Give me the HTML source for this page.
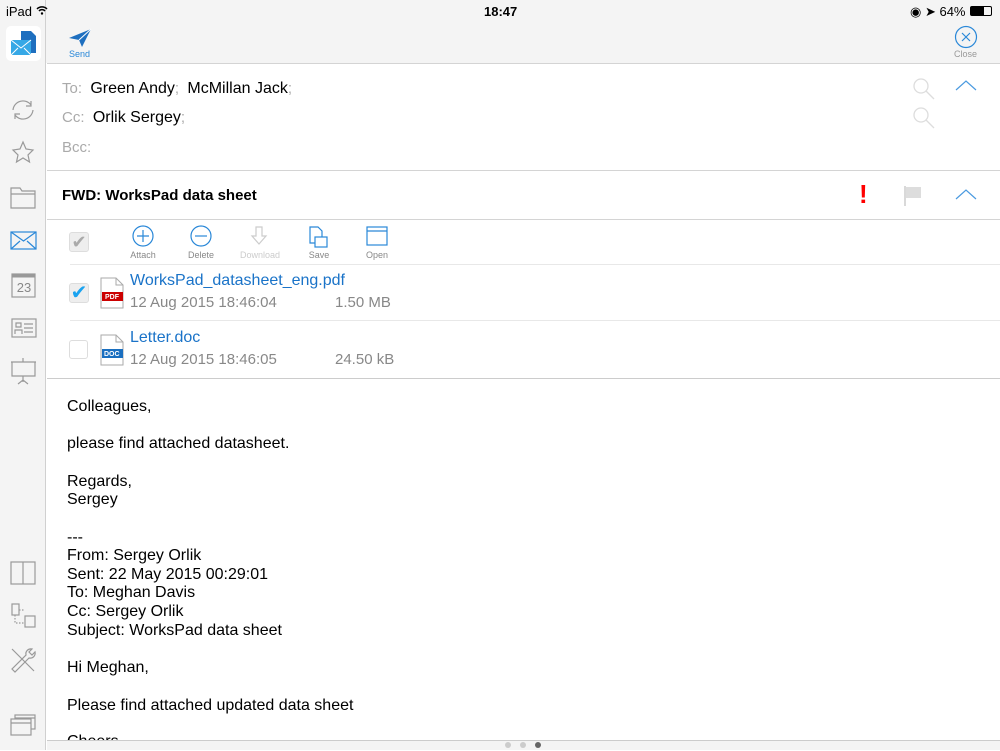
<!DOCTYPE html>
<html><head><meta charset="utf-8"><style>
*{margin:0;padding:0;box-sizing:border-box}
body{width:1000px;height:750px;overflow:hidden;background:#fff;font-family:"Liberation Sans",sans-serif;position:relative;color:#000}
.a{position:absolute}
.g{color:#aaa}
.line{position:absolute;height:1px;background:#d4d4d4}
.body div{position:absolute;left:67px;font-size:16px;white-space:nowrap}
.tb{position:absolute;font-size:9px;color:#888;text-align:center;width:50px}
</style></head><body>
<div class="a" style="left:0;top:0;width:1000px;height:63px;background:#f4f4f4"></div>
<div class="a" style="left:0;top:0;width:46px;height:750px;background:#f4f4f4;border-right:1px solid #d0d0d0"></div>
<div class="a" style="left:6px;top:4px;font-size:13px">iPad</div>
<svg class="a" style="left:36px;top:5px" width="12" height="10" viewBox="0 0 12 10"><path d="M1 4a7 7 0 0 1 10 0M3 6a4 4 0 0 1 6 0" stroke="#000" stroke-width="1.5" fill="none"/><circle cx="6" cy="8.5" r="1.2"/></svg>
<div class="a" style="left:484px;top:4px;font-size:13px;font-weight:bold">18:47</div>
<div class="a" style="left:910px;top:4px;font-size:13px">◉ ➤ 64%</div>
<div class="a" style="left:970px;top:6px;width:22px;height:10px;border:1px solid #000;border-radius:2px"><div style="width:13px;height:8px;background:#000"></div></div>
<div class="a" style="left:6px;top:26px;width:35px;height:35px;background:#fff;border-radius:5px"></div>
<svg class="a" style="left:9px;top:29px" width="30" height="30" viewBox="0 0 30 30"><path d="M12 2h10l5 5v17H12z" fill="#1e6fbf"/><rect x="2" y="11" width="20" height="15" fill="#36a8e6"/><path d="M2 11l10 8 10-8M2 26l7-7M22 26l-7-7" stroke="#fff" fill="none"/></svg>
<svg class="a" style="left:0;top:90px" width="46" height="310" viewBox="0 0 46 310" fill="none" stroke="#999" stroke-width="1.2">
<path d="M13 20a10 10 0 0 1 18-5M33 20a10 10 0 0 1-18 5M31 11v5h-5M15 29v-5h5"/>
<path d="M23 52l3 7 7 1-5 5 1.5 7L23 68l-6.5 4 1.5-7-5-5 7-1z"/>
<path d="M11 98h9l2 3h13v17H11z M11 104h24"/>
<rect x="11" y="142" width="25" height="17" stroke="#2a88d8"/><path d="M11 142l12.5 9 12.5-9M11 159l9-8M36 159l-9-8" stroke="#2a88d8"/>
<rect x="12" y="184" width="23" height="23"/><path d="M12 186h23" stroke-width="3"/>
<rect x="12" y="229" width="24" height="18"/><path d="M16 233h5v4h-5zM15 244v-4h7v4M24 234h9M24 238h9M24 242h9"/>
<path d="M11 272h25M12 272v14h23v-14M23 268v4M23 286v6M18 294l5-4 5 4"/>
</svg>
<div class="a" style="left:14px;top:280px;width:20px;text-align:center;font-size:13px;color:#888">23</div>
<svg class="a" style="left:0;top:555px" width="46" height="190" viewBox="0 0 46 190" fill="none" stroke="#999" stroke-width="1.2">
<rect x="11" y="7" width="24" height="22"/><path d="M23 7v22"/>
<rect x="12" y="49" width="7" height="11"/><rect x="25" y="61" width="10" height="11"/><path d="M19 55h6M15 60v8h10" stroke-dasharray="1.5 1.5"/>
<path d="M12 94l22 22M32 94a5 5 0 0 0-6 6L12 114l3 3 14-14a5 5 0 0 0 6-6l-3 3-3-3z"/>
<rect x="15" y="160" width="20" height="14"/><rect x="11" y="164" width="20" height="16" fill="#f4f4f4"/><path d="M11 168h20M15 163h20"/>
</svg>
<svg class="a" style="left:68px;top:28px" width="24" height="20" viewBox="0 0 24 20"><path d="M1 10L23 1 14 19 11 12z" fill="#1e6fbf"/><path d="M11 12L23 1" stroke="#fff"/></svg>
<div class="a" style="left:69px;top:49px;font-size:9px;color:#2a88d8">Send</div>
<svg class="a" style="left:954px;top:25px" width="24" height="24"><circle cx="12" cy="12" r="10.5" stroke="#2a88d8" stroke-width="1.2" fill="none"/><path d="M8 8l8 8M16 8l-8 8" stroke="#2a88d8" stroke-width="1.2"/></svg>
<div class="a" style="left:954px;top:49px;font-size:9px;color:#999">Close</div>
<div class="line" style="left:47px;top:63px;width:953px"></div>
<div class="a" style="left:62px;top:80px;font-size:15px"><span class="g">To:</span>&nbsp; <span style="font-size:16px">Green Andy</span><span class="g">;</span>&nbsp; <span style="font-size:16px">McMillan Jack</span><span class="g">;</span></div>
<div class="a" style="left:62px;top:109px;font-size:15px"><span class="g">Cc:</span>&nbsp; <span style="font-size:16px">Orlik Sergey</span><span class="g">;</span></div>
<div class="a g" style="left:62px;top:139px;font-size:15px">Bcc:</div>
<svg class="a" style="left:912px;top:77px" width="26" height="60" fill="none" stroke="#ddd" stroke-width="1.3"><circle cx="9" cy="9" r="7"/><path d="M14 14l8 8"/><circle cx="9" cy="38" r="7"/><path d="M14 43l8 8"/></svg>
<svg class="a" style="left:954px;top:80px" width="24" height="12"><path d="M2 10l10-9 10 9" stroke="#4a9ae0" fill="none" stroke-width="1.2"/></svg>
<div class="line" style="left:47px;top:170px;width:953px"></div>
<div class="a" style="left:62px;top:187px;font-size:15px;font-weight:bold">FWD: WorksPad data sheet</div>
<div class="a" style="left:859px;top:180px;font-size:26px;font-weight:bold;color:#f00;line-height:28px">!</div>
<svg class="a" style="left:904px;top:186px" width="18" height="20"><path d="M1 0v20" stroke="#ccc" stroke-width="1.5"/><path d="M2 1h15v11H2z" fill="#ddd"/></svg>
<svg class="a" style="left:954px;top:189px" width="24" height="12"><path d="M2 10l10-9 10 9" stroke="#4a9ae0" fill="none" stroke-width="1.2"/></svg>
<div class="line" style="left:47px;top:219px;width:953px"></div>
<div class="a" style="left:69px;top:232px;width:20px;height:20px;background:#eee;border:1px solid #ddd;border-radius:3px;color:#aaa;font-size:18px;line-height:18px;text-align:center">✔</div>
<svg class="a" style="left:130px;top:225px" width="260" height="26" fill="none" stroke-width="1.2">
<circle cx="13" cy="11" r="10" stroke="#2a88d8"/><path d="M13 5v12M7 11h12" stroke="#2a88d8"/>
<circle cx="71" cy="11" r="10" stroke="#2a88d8"/><path d="M65 11h12" stroke="#2a88d8"/>
<path d="M126 2h6v9h4l-7 8-7-8h4z" stroke="#ccc"/>
<path d="M180 2h8l4 4v12h-12z" stroke="#2a88d8"/><rect x="185" y="12" width="12" height="10" stroke="#2a88d8" fill="#fff"/>
<rect x="237" y="2" width="20" height="18" stroke="#2a88d8"/><path d="M237 6h20" stroke="#2a88d8"/>
</svg>
<div class="tb" style="left:118px;top:250px">Attach</div>
<div class="tb" style="left:176px;top:250px">Delete</div>
<div class="tb" style="left:235px;top:250px;color:#ccc">Download</div>
<div class="tb" style="left:294px;top:250px">Save</div>
<div class="tb" style="left:352px;top:250px">Open</div>
<div class="line" style="left:70px;top:264px;width:930px;background:#e8e8e8"></div>
<div class="a" style="left:69px;top:283px;width:20px;height:20px;background:#eee;border:1px solid #ddd;border-radius:3px;color:#1aa3f0;font-size:20px;line-height:18px;text-align:center">✔</div>
<svg class="a" style="left:100px;top:277px" width="24" height="32"><path d="M1 1h15l7 7v23H1z" fill="#fff" stroke="#aaa"/><path d="M16 1v7h7" fill="none" stroke="#aaa"/><rect x="2" y="15" width="21" height="9" fill="#c00"/><text x="5" y="22" font-size="7" fill="#fff" font-family="Liberation Sans" font-weight="bold">PDF</text></svg>
<div class="a" style="left:130px;top:272px;font-size:16px;color:#1a73c8">WorksPad_datasheet_eng.pdf</div>
<div class="a" style="left:130px;top:294px;font-size:15px;color:#888">12 Aug 2015 18:46:04</div>
<div class="a" style="left:335px;top:294px;font-size:15px;color:#888">1.50 MB</div>
<div class="line" style="left:70px;top:320px;width:930px;background:#e8e8e8"></div>
<div class="a" style="left:69px;top:340px;width:19px;height:19px;border:1px solid #ddd;border-radius:3px"></div>
<svg class="a" style="left:100px;top:334px" width="24" height="32"><path d="M1 1h15l7 7v23H1z" fill="#fff" stroke="#aaa"/><path d="M16 1v7h7" fill="none" stroke="#aaa"/><rect x="2" y="15" width="21" height="9" fill="#1a6fc0"/><text x="4" y="22" font-size="7" fill="#fff" font-family="Liberation Sans" font-weight="bold">DOC</text></svg>
<div class="a" style="left:130px;top:329px;font-size:16px;color:#1a73c8">Letter.doc</div>
<div class="a" style="left:130px;top:351px;font-size:15px;color:#888">12 Aug 2015 18:46:05</div>
<div class="a" style="left:335px;top:351px;font-size:15px;color:#888">24.50 kB</div>
<div class="line" style="left:47px;top:378px;width:953px;background:#ccc"></div>
<div class="body">
<div style="top:398px">Colleagues,</div>
<div style="top:435px">please find attached datasheet.</div>
<div style="top:473px">Regards,</div>
<div style="top:491px">Sergey</div>
<div style="top:529px">---</div>
<div style="top:547px">From: Sergey Orlik</div>
<div style="top:566px">Sent: 22 May 2015 00:29:01</div>
<div style="top:584px">To: Meghan Davis</div>
<div style="top:603px">Cc: Sergey Orlik</div>
<div style="top:622px">Subject: WorksPad data sheet</div>
<div style="top:659px">Hi Meghan,</div>
<div style="top:697px">Please find attached updated data sheet</div>
<div style="top:733px">Cheers</div>
</div>
<div class="a" style="left:47px;top:740px;width:953px;height:10px;background:#f4f4f4;border-top:1px solid #ccc"></div>
<div class="a" style="left:505px;top:742px;width:6px;height:6px;border-radius:3px;background:#ccc"></div>
<div class="a" style="left:520px;top:742px;width:6px;height:6px;border-radius:3px;background:#ccc"></div>
<div class="a" style="left:535px;top:742px;width:6px;height:6px;border-radius:3px;background:#666"></div>
</body></html>
